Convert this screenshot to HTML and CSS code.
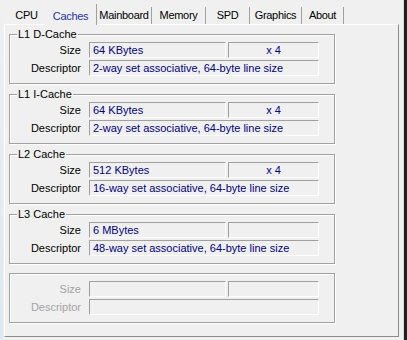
FILE: index.html
```html
<!DOCTYPE html>
<html lang="en">
<head>
    <meta charset="UTF-8">
    <title>CPU-Z Caches</title>
    <link rel="stylesheet" href="styles.css">
</head>
<body>
    <div class="window">
        <div class="edge-left"></div>
        <div class="client">
            <!-- Tabs -->
            <ul class="tabs">
                <li class="tab tab-cpu">CPU</li>
                <li class="tab tab-caches active">Caches</li>
                <li class="tab tab-mainboard">Mainboard</li>
                <li class="tab tab-memory">Memory</li>
                <li class="tab tab-spd">SPD</li>
                <li class="tab tab-graphics">Graphics</li>
                <li class="tab tab-about">About</li>
            </ul>

            <div class="panel">
                <fieldset class="cache">
                    <legend>L1 D-Cache</legend>
                    <div class="row">
                        <span class="label">Size</span>
                        <span class="field size">64 KBytes</span>
                        <span class="field count">x 4</span>
                    </div>
                    <div class="row">
                        <span class="label">Descriptor</span>
                        <span class="field desc">2-way set associative, 64-byte line size</span>
                    </div>
                </fieldset>

                <fieldset class="cache">
                    <legend>L1 I-Cache</legend>
                    <div class="row">
                        <span class="label">Size</span>
                        <span class="field size">64 KBytes</span>
                        <span class="field count">x 4</span>
                    </div>
                    <div class="row">
                        <span class="label">Descriptor</span>
                        <span class="field desc">2-way set associative, 64-byte line size</span>
                    </div>
                </fieldset>

                <fieldset class="cache">
                    <legend>L2 Cache</legend>
                    <div class="row">
                        <span class="label">Size</span>
                        <span class="field size">512 KBytes</span>
                        <span class="field count">x 4</span>
                    </div>
                    <div class="row">
                        <span class="label">Descriptor</span>
                        <span class="field desc">16-way set associative, 64-byte line size</span>
                    </div>
                </fieldset>

                <fieldset class="cache">
                    <legend>L3 Cache</legend>
                    <div class="row">
                        <span class="label">Size</span>
                        <span class="field size">6 MBytes</span>
                        <span class="field count"></span>
                    </div>
                    <div class="row">
                        <span class="label">Descriptor</span>
                        <span class="field desc">48-way set associative, 64-byte line size</span>
                    </div>
                </fieldset>

                <!-- empty block (disabled) -->
                <fieldset class="cache empty">
                    <div class="row">
                        <span class="label">Size</span>
                        <span class="field size"></span>
                        <span class="field count"></span>
                    </div>
                    <div class="row">
                        <span class="label">Descriptor</span>
                        <span class="field desc"></span>
                    </div>
                </fieldset>
            </div>
        </div>
        <div class="edge-right"></div>
    </div>
</body>
</html>
```

FILE: styles.css
```css
body {
    margin: 0;
    width: 407px;
    height: 340px;
    overflow: hidden;
    font-family: "Liberation Sans", Arial, sans-serif;
    font-size: 11px;
    background-color: #f0f0f0;
    color: #000;
}
.window {
    display: flex;
    height: 340px;
}
.edge-left {
    width: 3px;
    background: linear-gradient(#f0f0f0, #dde7f2);
}
.client {
    width: 400px;
}
.edge-right {
    width: 3px;
    background-color: #1e1e1e;
    border-left: 1px solid #cfd9e4;
}

/* Tabs */
.tabs {
    display: flex;
    align-items: flex-end;
    list-style: none;
    margin: 0;
    padding: 0 0 0 5px;
    height: 24px;
}
.tab {
    box-sizing: border-box;
    height: 17px;
    line-height: 16px;
    text-align: center;
    letter-spacing: -0.3px;
    border-right: 1px solid #a0a0a0;
}
.tab.active {
    position: relative;
    z-index: 1;
    height: 21px;
    padding-top: 4px;
    margin-bottom: -1px;
    background-color: #f0f0f0;
    color: #2233aa;
}
.tab-cpu { width: 37px; border-right: none; }
.tab-caches { width: 52px; }
.tab-mainboard { width: 55px; }
.tab-memory { width: 54px; }
.tab-spd { width: 44px; }
.tab-graphics { width: 52px; }
.tab-about { width: 42px; }

/* Panel */
.panel {
    box-sizing: border-box;
    width: 395px;
    height: 313px;
    margin-left: 1px;
    padding: 3px 0 0 4px;
    border-top: 1px solid #fff;
    border-left: 1px solid #fff;
    border-right: 1px solid #8c8c8c;
    border-bottom: 1px solid #8c8c8c;
}
.cache {
    box-sizing: border-box;
    width: 326px;
    min-width: 0;
    margin: 0 0 4px 0;
    padding: 1px 0 7px 0;
    border: 1px solid #a0a0a0;
    box-shadow: inset 1px 1px 0 #fff, 1px 1px 0 #fff;
}
.cache legend {
    margin-left: 7px;
    padding: 0 1px;
    line-height: 13px;
    background-color: #f0f0f0;
}
.cache.empty {
    margin-top: 9px;
    padding-top: 7px;
}
.row {
    display: flex;
    height: 16px;
}
.row + .row {
    margin-top: 2px;
}
.label {
    width: 71px;
    margin-right: 8px;
    text-align: right;
    line-height: 16px;
}
.empty .label {
    color: #a3a3a3;
}
.field {
    box-sizing: border-box;
    height: 16px;
    line-height: 14px;
    padding-left: 3px;
    color: #000080;
    white-space: nowrap;
    overflow: hidden;
    border-top: 1px solid #a0a0a0;
    border-left: 1px solid #a0a0a0;
    border-bottom: 1px solid #fff;
    border-right: 1px solid #fff;
}
.size { width: 137px; }
.count {
    width: 91px;
    margin-left: 2px;
    padding-left: 0;
    text-align: center;
}
.desc { width: 230px; }
```
